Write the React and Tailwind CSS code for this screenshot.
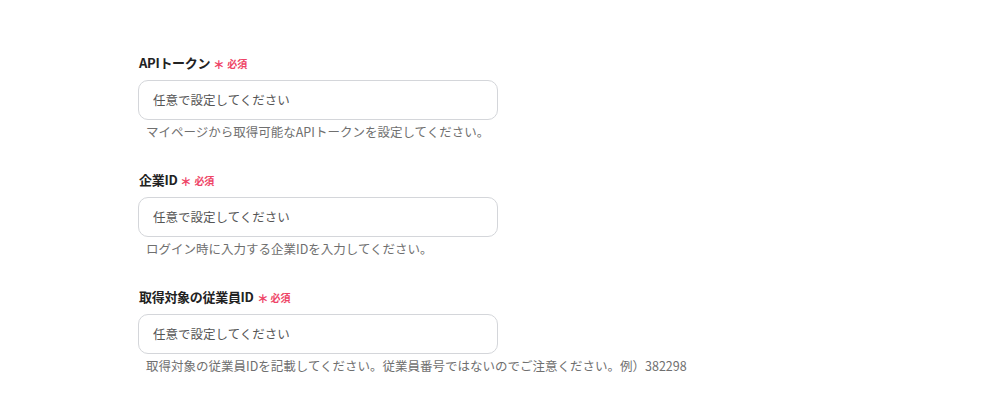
import React from 'react';

const fields = [
  {
    id: 'api-token',
    label: 'APIトークン',
    help: 'マイページから取得可能なAPIトークンを設定してください。',
  },
  {
    id: 'company-id',
    label: '企業ID',
    help: 'ログイン時に入力する企業IDを入力してください。',
  },
  {
    id: 'employee-id',
    label: '取得対象の従業員ID',
    help: '取得対象の従業員IDを記載してください。従業員番号ではないのでご注意ください。例）382298',
  },
];

const App = () => {
  return (
    <div
      className="w-[1004px] h-[404px] bg-white pl-[138px] pt-[53px]"
      style={{ fontFamily: '"Noto Sans CJK JP", "Noto Sans", sans-serif' }}
    >
      <div className="flex flex-col gap-[29px]">
        {fields.map((f) => (
          <div key={f.id} className="flex flex-col">
            <div className="flex items-center h-[20px] pl-[1px]">
              <span className="text-[13px] font-bold text-[#222] tracking-[-0.3px]">{f.label}</span>
              <span className="ml-[3px] text-[14px] leading-none text-[#ee4466]">∗</span>
              <span className="ml-[2px] text-[10px] font-bold text-[#ee4466]">必須</span>
            </div>
            <div className="mt-[7px] w-[360px] h-[40px] border border-[#d4d6da] rounded-[10px] flex items-center pl-[14px]">
              <span className="text-[12.5px] text-[#555]">任意で設定してください</span>
            </div>
            <p className="mt-[3px] pl-[8px] h-[18px] leading-[18px] text-[12.5px] text-[#6f6f6f]">{f.help}</p>
          </div>
        ))}
      </div>
    </div>
  );
};

export default App;
